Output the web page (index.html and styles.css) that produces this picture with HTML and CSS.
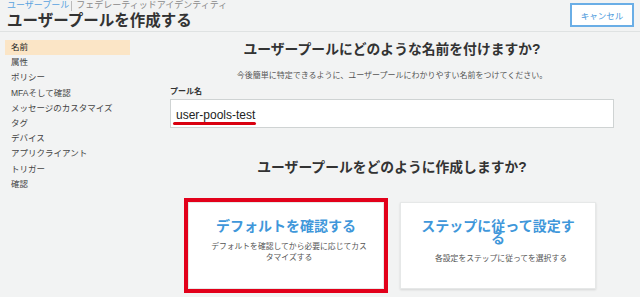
FILE: index.html
```html
<html>
<head>
  <meta charset="utf-8">
  <title>ユーザープールを作成する</title>
  <link rel="stylesheet" href="styles.css">
</head>
<body>
  <div class="cabecera">
    <div class="titulos">
      <div class="migas">
        <span class="miga-activa">ユーザープール</span><span class="separador"></span><span class="miga">フェデレーティッドアイデンティティ</span>
      </div>
      <h1 class="titulo">ユーザープールを作成する</h1>
    </div>
    <button class="cancelar">キャンセル</button>
  </div>

  <div class="cuerpo">
    <ul class="menu">
      <li class="activo">名前</li>
      <li>属性</li>
      <li>ポリシー</li>
      <li>MFAそして確認</li>
      <li>メッセージのカスタマイズ</li>
      <li>タグ</li>
      <li>デバイス</li>
      <li>アプリクライアント</li>
      <li>トリガー</li>
      <li>確認</li>
    </ul>

    <div class="contenido">
      <h2 class="pregunta">ユーザープールにどのような名前を付けますか?</h2>
      <p class="ayuda">今後簡単に特定できるように、ユーザープールにわかりやすい名前をつけてください。</p>
      <div class="etiqueta">プール名</div>
      <div class="campo"><span class="valor">user-pools-test</span></div>

      <h2 class="pregunta segunda">ユーザープールをどのように作成しますか?</h2>
      <div class="tarjetas">
        <div class="tarjeta marcada">
          <div class="tarjeta-titulo">デフォルトを確認する</div>
          <div class="tarjeta-texto">デフォルトを確認してから必要に応じてカスタマイズする</div>
        </div>
        <div class="tarjeta">
          <div class="tarjeta-titulo">ステップに従って設定する</div>
          <div class="tarjeta-texto">各設定をステップに従ってを選択する</div>
        </div>
      </div>
    </div>
  </div>
</body>
</html>
```

FILE: styles.css
```css
body {
  margin: 0;
  background: #f2f3f3;
  font-family: "Liberation Sans", "Noto Sans CJK JP", sans-serif;
  color: #333;
}

.cabecera {
  display: flex;
  justify-content: space-between;
  align-items: flex-start;
  height: 31px;
  border-bottom: 1px solid #dfe2e2;
  padding: 0 6px 0 7px;
}

.migas {
  font-size: 9px;
  line-height: 11px;
  display: flex;
  align-items: center;
  margin-top: 0;
}

.miga-activa {
  color: #5aa3e0;
}

.separador {
  width: 1px;
  height: 10px;
  background: #bbb;
  margin: 0 4px 0 2px;
}

.miga {
  color: #8a8a8a;
}

.titulo {
  margin: 0;
  font-size: 15.5px;
  line-height: 19px;
  font-weight: bold;
  color: #333;
}

.cancelar {
  margin-top: 3px;
  width: 64px;
  height: 24px;
  background: #fff;
  border: 2px solid #6aaee6;
  color: #4a98dc;
  font-family: inherit;
  font-size: 8.5px;
  padding: 0;
}

.cuerpo {
  display: flex;
}

.menu {
  list-style: none;
  margin: 0;
  padding: 8px 0 0 5px;
  width: 125px;
}

.menu li {
  height: 15.2px;
  line-height: 15.2px;
  font-size: 8.5px;
  padding-left: 6px;
  color: #444;
}

.menu li.activo {
  background: #fbe5c6;
  color: #222;
}

.contenido {
  flex: 1;
  padding: 0 26px 0 40px;
}

.pregunta {
  margin: 9px 0 0;
  text-align: center;
  font-size: 13.8px;
  line-height: 18px;
  font-weight: bold;
  color: #333;
}

.ayuda {
  margin: 11px 0 0;
  text-align: center;
  font-size: 8px;
  line-height: 12px;
  color: #555;
}

.etiqueta {
  margin-top: 4px;
  font-size: 8px;
  line-height: 11px;
  font-weight: bold;
  color: #333;
}

.campo {
  margin-top: 2px;
  height: 27px;
  background: #fff;
  border: 1px solid #cfd3d3;
  padding: 0 0 0 5px;
  display: flex;
  align-items: center;
}

.valor {
  position: relative;
  font-size: 12px;
  line-height: 14px;
  margin-top: 3px;
  color: #222;
}

.valor::after {
  content: "";
  position: absolute;
  left: -3px;
  right: -1px;
  bottom: -3px;
  height: 3px;
  border-radius: 2px;
  background: #d9000f;
}

.pregunta.segunda {
  margin-top: 31px;
}

.tarjetas {
  display: flex;
  justify-content: center;
  gap: 16px;
  margin-top: 25px;
}

.tarjeta {
  width: 196px;
  height: 87px;
  box-sizing: border-box;
  background: #fff;
  border: 1px solid #e6e8e8;
  box-shadow: 0 1px 2px rgba(0, 0, 0, 0.12);
  padding: 17px 20px 0;
  text-align: center;
}

.tarjeta.marcada {
  outline: 4px solid #e2001a;
}

.tarjeta-titulo {
  font-size: 14px;
  line-height: 12px;
  font-weight: bold;
  color: #3f97da;
}

.tarjeta-texto {
  margin: 10px auto 0;
  width: 160px;
  font-size: 7.8px;
  line-height: 10.5px;
  color: #555;
}
```
